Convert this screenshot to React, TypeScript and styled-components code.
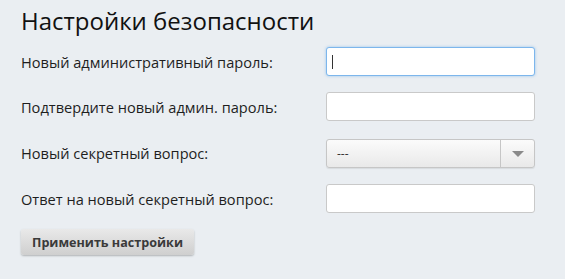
import React from "react";
import styled, { createGlobalStyle } from "styled-components";

const GlobalStyle = createGlobalStyle`
  html, body {
    margin: 0;
    padding: 0;
    background: #eaeef2;
  }
  body {
    font-family: "Open Sans", "Liberation Sans", sans-serif;
    color: #222;
  }
`;

const Page = styled.div`
  width: 565px;
  height: 279px;
  padding: 5px 0 0 21px;
  box-sizing: border-box;
`;

const Title = styled.h1`
  margin: 0 0 10px;
  font-size: 24px;
  font-weight: 400;
  line-height: 32px;
  color: #111;
`;

const Form = styled.div`
  display: grid;
  grid-template-columns: 305px 209px;
  row-gap: 16px;
  align-items: center;
`;

const Label = styled.label`
  font-size: 14.6px;
  line-height: 20px;
  color: #1e1e1e;
`;

const Field = styled.div`
  position: relative;
  width: 209px;
`;

const TextInput = styled.input<{ $focused?: boolean }>`
  display: block;
  box-sizing: border-box;
  width: 209px;
  height: 29px;
  margin: 0;
  padding: 0 6px;
  border-radius: 3px;
  border: 1px solid ${(p) => (p.$focused ? "#7db6ec" : "#c9c9c9")};
  background: #fff;
  font: 14px "Open Sans", sans-serif;
  outline: none;
  box-shadow: ${(p) => (p.$focused ? "0 0 3px rgba(100, 170, 235, 0.6)" : "none")};
`;

const Caret = styled.span`
  position: absolute;
  left: 6px;
  top: 8px;
  width: 1px;
  height: 14px;
  background: #333;
`;

const Select = styled.div`
  box-sizing: border-box;
  width: 209px;
  height: 29px;
  margin-top: 2px;
  display: flex;
  align-items: stretch;
  border: 1px solid #c6c6c6;
  border-radius: 3px;
  background: linear-gradient(#fbfbfb, #e9e9e9);
  box-shadow: 0 1px 1px rgba(0, 0, 0, 0.08);
`;

const SelectValue = styled.div`
  flex: 1;
  display: flex;
  align-items: center;
  padding-left: 10px;
  font-size: 12px;
  color: #333;
  border-right: 1px solid #c6c6c6;
`;

const SelectArrow = styled.div`
  width: 33px;
  display: flex;
  align-items: center;
  justify-content: center;
`;

const Triangle = styled.span`
  width: 0;
  height: 0;
  border-left: 6px solid transparent;
  border-right: 6px solid transparent;
  border-top: 6px solid #8a8a8a;
  margin-top: 1px;
`;

const Button = styled.button`
  margin-top: 16px;
  height: 26px;
  padding: 0 11px;
  border: none;
  border-radius: 3px;
  background: linear-gradient(#e9e9e9, #cfcfcf);
  box-shadow: 0 1px 2px rgba(0, 0, 0, 0.25);
  font: 700 12.6px "Open Sans", sans-serif;
  color: #3a3a3a;
  cursor: pointer;
`;

export default function App() {
  return (
    <Page>
      <GlobalStyle />
      <Title>Настройки безопасности</Title>
      <Form>
        <Label>Новый административный пароль:</Label>
        <Field>
          <TextInput type="password" $focused />
          <Caret />
        </Field>
        <Label>Подтвердите новый админ. пароль:</Label>
        <TextInput type="password" />
        <Label>Новый секретный вопрос:</Label>
        <Select>
          <SelectValue>---</SelectValue>
          <SelectArrow>
            <Triangle />
          </SelectArrow>
        </Select>
        <Label>Ответ на новый секретный вопрос:</Label>
        <TextInput type="text" />
      </Form>
      <Button>Применить настройки</Button>
    </Page>
  );
}
